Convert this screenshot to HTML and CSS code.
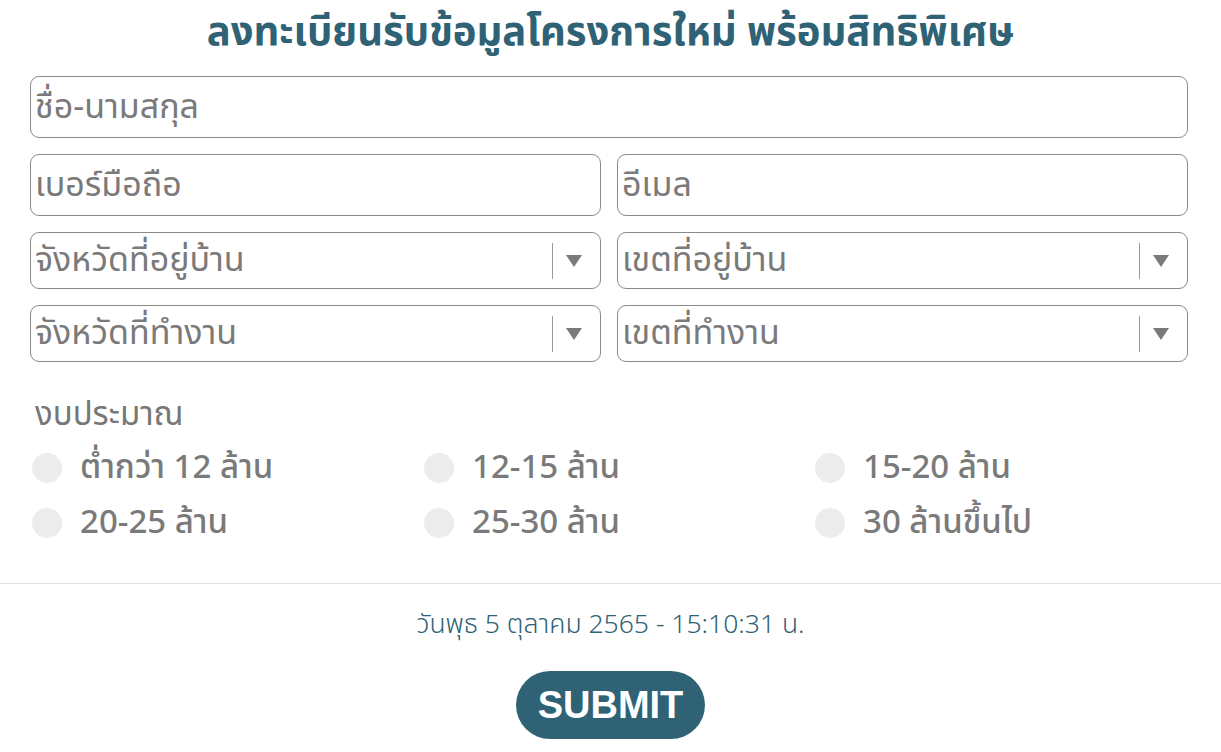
FILE: index.html
```html
<!DOCTYPE html>
<html lang="th">
<head>
<meta charset="utf-8">
<title>ลงทะเบียน</title>
<link rel="stylesheet" href="styles.css">
</head>
<body>
<div class="page">
  <h1 class="title">ลงทะเบียนรับข้อมูลโครงการใหม่ พร้อมสิทธิพิเศษ</h1>
  <form class="form">
    <div class="field full"><span class="ph">ชื่อ-นามสกุล</span></div>
    <div class="row">
      <div class="field"><span class="ph">เบอร์มือถือ</span></div>
      <div class="field"><span class="ph">อีเมล</span></div>
    </div>
    <div class="row">
      <div class="field select"><span class="ph">จังหวัดที่อยู่บ้าน</span><span class="sep"></span><span class="arrow"></span></div>
      <div class="field select"><span class="ph">เขตที่อยู่บ้าน</span><span class="sep"></span><span class="arrow"></span></div>
    </div>
    <div class="row">
      <div class="field select"><span class="ph">จังหวัดที่ทำงาน</span><span class="sep"></span><span class="arrow"></span></div>
      <div class="field select"><span class="ph">เขตที่ทำงาน</span><span class="sep"></span><span class="arrow"></span></div>
    </div>
    <div class="budget-label">งบประมาณ</div>
    <div class="radios">
      <label class="radio"><span class="dot"></span>ต่ำกว่า 12 ล้าน</label>
      <label class="radio"><span class="dot"></span>12-15 ล้าน</label>
      <label class="radio"><span class="dot"></span>15-20 ล้าน</label>
      <label class="radio"><span class="dot"></span>20-25 ล้าน</label>
      <label class="radio"><span class="dot"></span>25-30 ล้าน</label>
      <label class="radio"><span class="dot"></span>30 ล้านขึ้นไป</label>
    </div>
  </form>
  <div class="footer">
    <div class="date">วันพุธ 5 ตุลาคม 2565 - 15:10:31 น.</div>
    <button class="submit" type="button">SUBMIT</button>
  </div>
</div>
</body>
</html>
```
FILE: styles.css
```css
* { box-sizing: border-box; }
html, body { margin: 0; padding: 0; background: #fff; }
body {
  font-family: "Noto Sans Thai", "Noto Sans", "Liberation Sans", sans-serif;
  color: #777;
}
.page { width: 1221px; }
.title {
  margin: 0;
  padding-top: 8px;
  height: 76px;
  text-align: center;
  font-size: 40px;
  font-weight: 700;
  color: #2f6275;
  line-height: 50px;
}
.form {
  padding: 0 33px 0 30px;
  display: flex;
  flex-direction: column;
  gap: 16px;
}
.row { display: grid; grid-template-columns: 1fr 1fr; gap: 16px; }
.field {
  height: 62px;
  border: 1px solid #8a8a8a;
  border-radius: 9px;
  display: flex;
  align-items: center;
  padding-left: 4px;
  font-size: 34px;
  color: #7a7a7a;
  white-space: nowrap;
}
.field.select { height: 57px; padding-right: 18px; }
.ph { flex: 1; }
.sep { width: 1px; height: 36px; background: #999; margin-right: 13px; }
.arrow {
  width: 0; height: 0;
  border-left: 8px solid transparent;
  border-right: 8px solid transparent;
  border-top: 12px solid #7a7a7a;
}
.budget-label {
  font-size: 33px;
  padding-left: 5px;
  margin-top: 16px;
  height: 42px;
  line-height: 42px;
}
.radios {
  display: grid;
  grid-template-columns: 392px 391px 1fr;
  row-gap: 16px;
  margin-top: -4px;
  padding-left: 2px;
}
.radio {
  display: flex;
  align-items: center;
  gap: 18px;
  font-size: 33px;
  font-weight: 500;
  height: 39px;
  color: #7a7a7a;
  white-space: nowrap;
}
.dot { width: 30px; height: 30px; border-radius: 50%; background: #ececec; flex: none; }
.footer {
  margin-top: 41px;
  border-top: 1px solid #e2e2e2;
  display: flex;
  flex-direction: column;
  align-items: center;
}
.date {
  margin-top: 24px;
  font-size: 26.5px;
  font-weight: 300;
  color: #2f6275;
  line-height: 34px;
}
.submit {
  margin-top: 29px;
  width: 189px;
  height: 68px;
  border: none;
  border-radius: 34px;
  background: #2f6275;
  color: #fff;
  font-family: "Liberation Sans", Arial, sans-serif;
  font-weight: 700;
  font-size: 38px;
  padding: 0;
}
```
